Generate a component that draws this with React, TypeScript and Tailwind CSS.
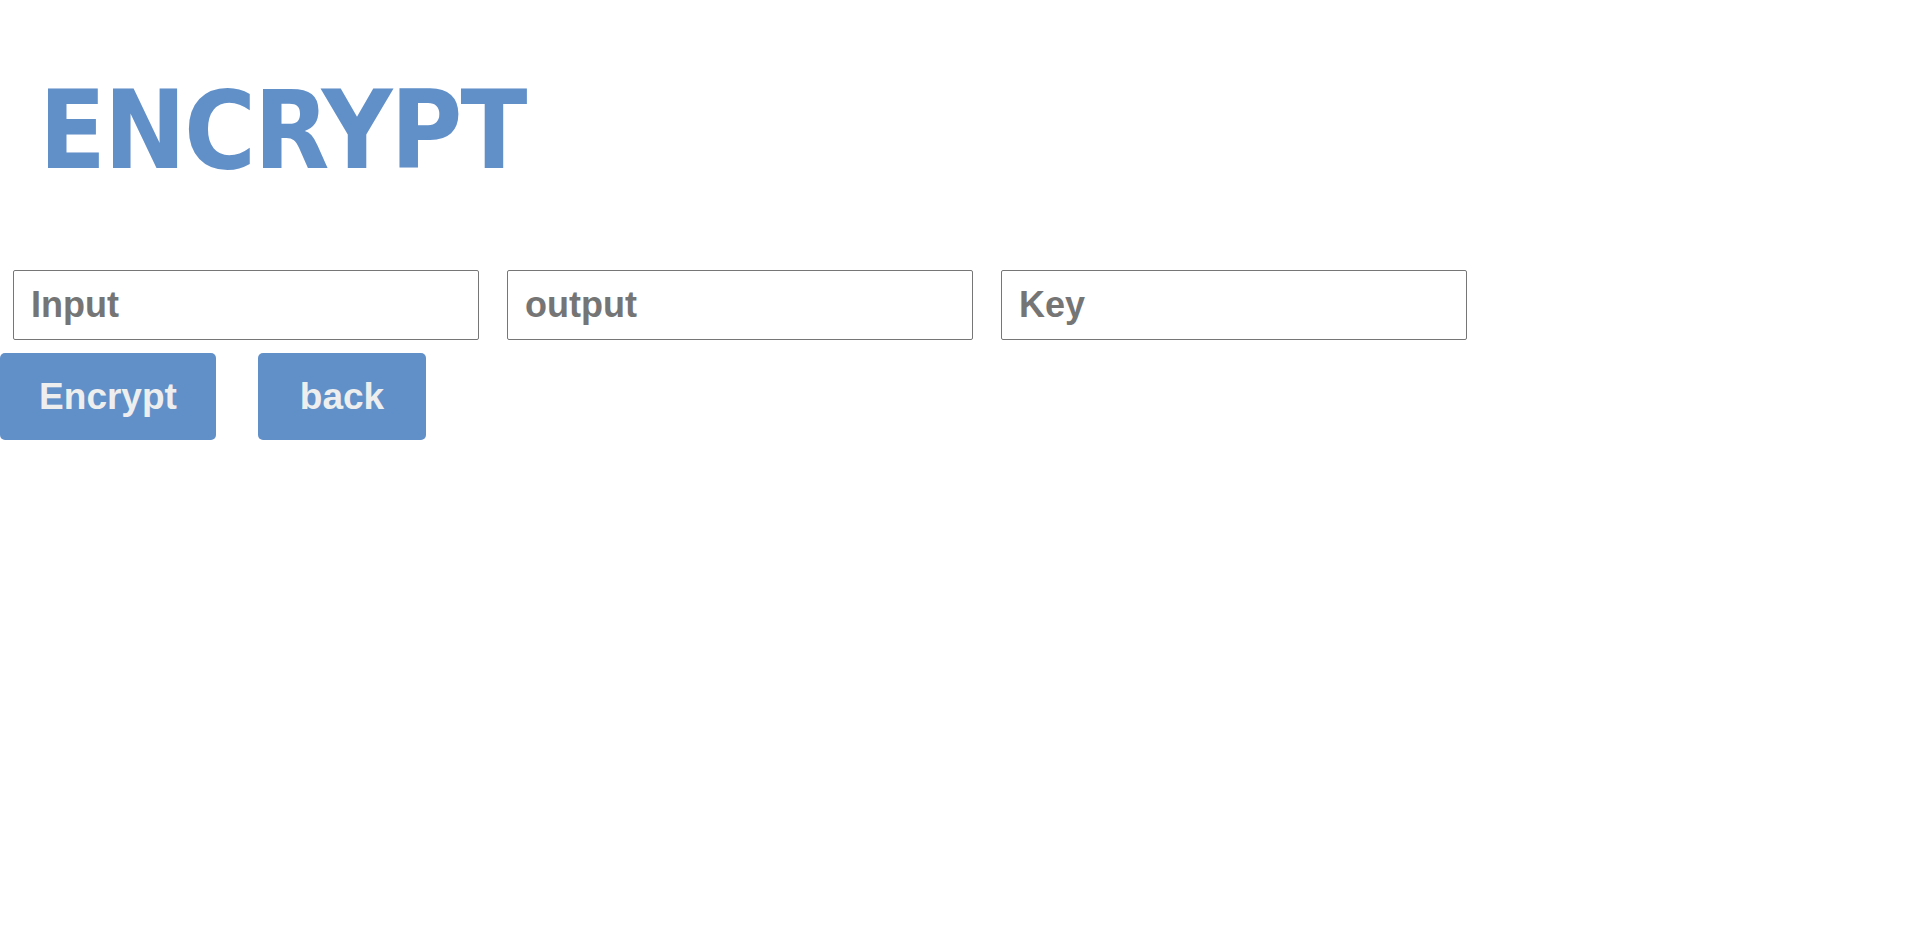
export default function App() {
  const fields = ["Input", "output", "Key"];

  return (
    <div className="min-h-[932px] bg-white font-['Liberation_Sans',Arial,sans-serif]">
      {/* Title */}
      <h1 className="pl-[39px] pt-[76px] font-['DejaVu_Sans_Condensed','Liberation_Sans',sans-serif] text-[109px] font-bold leading-none tracking-[-2px] text-[#6190c9]">
        ENCRYPT
      </h1>

      {/* Fields */}
      <div className="mt-[85px] flex gap-[28px] pl-[13px]">
        {fields.map((label) => (
          <input
            key={label}
            placeholder={label}
            className="h-[70px] w-[466px] rounded-[2px] border border-[#767676] px-[17px] text-[36px] font-bold text-[#333] outline-none placeholder:text-[#757575]"
          />
        ))}
      </div>

      {/* Actions */}
      <div className="mt-[13px] flex gap-[42px]">
        <button className="h-[87px] w-[216px] rounded-[5px] bg-[#6190c9] text-[37px] font-bold text-[#eeeeee]">
          Encrypt
        </button>
        <button className="h-[87px] w-[168px] rounded-[5px] bg-[#6190c9] text-[37px] font-bold text-[#eeeeee]">
          back
        </button>
      </div>
    </div>
  );
}
